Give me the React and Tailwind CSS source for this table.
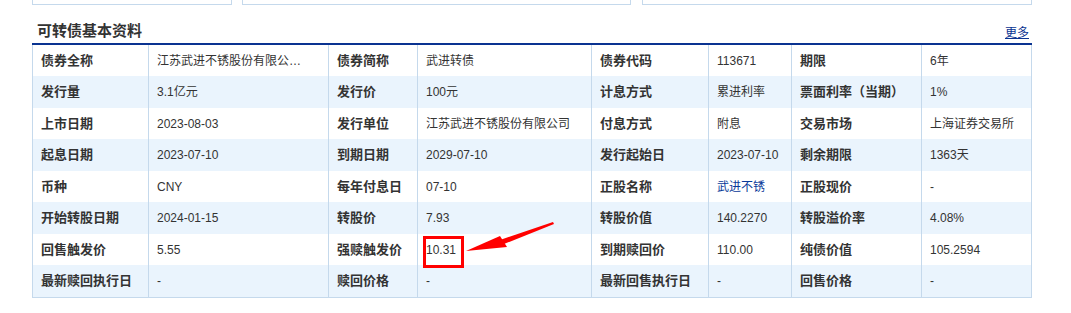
import React from "react";

const rows = [
  [["债券全称", "江苏武进不锈股份有限公…"], ["债券简称", "武进转债"], ["债券代码", "113671"], ["期限", "6年"]],
  [["发行量", "3.1亿元"], ["发行价", "100元"], ["计息方式", "累进利率"], ["票面利率（当期）", "1%"]],
  [["上市日期", "2023-08-03"], ["发行单位", "江苏武进不锈股份有限公司"], ["付息方式", "附息"], ["交易市场", "上海证券交易所"]],
  [["起息日期", "2023-07-10"], ["到期日期", "2029-07-10"], ["发行起始日", "2023-07-10"], ["剩余期限", "1363天"]],
  [["币种", "CNY"], ["每年付息日", "07-10"], ["正股名称", "武进不锈", true], ["正股现价", "-"]],
  [["开始转股日期", "2024-01-15"], ["转股价", "7.93"], ["转股价值", "140.2270"], ["转股溢价率", "4.08%"]],
  [["回售触发价", "5.55"], ["强赎触发价", "10.31"], ["到期赎回价", "110.00"], ["纯债价值", "105.2594"]],
  [["最新赎回执行日", "-"], ["赎回价格", "-"], ["最新回售执行日", "-"], ["回售价格", "-"]],
];

const font = { fontFamily: '"Liberation Sans", "Noto Sans CJK SC", sans-serif' };

export default function App() {
  return (
    <div className="relative w-[1071px] h-[313px] bg-white overflow-hidden" style={font}>
      {/* panels above */}
      <div className="flex ml-[32px]">
        <div className="w-[200px] h-[5px] border-x border-b border-[#c5d9ec]" />
        <div className="w-[389px] h-[5px] border-x border-b border-[#c5d9ec] ml-[10px]" />
        <div className="w-[390px] h-[5px] border-x border-b border-[#c5d9ec] ml-[11px]" />
      </div>

      {/* header */}
      <div className="ml-[32px] w-[1000px] h-[40px] flex justify-between items-end border-b-2 border-[#0a3391]">
        <div className="pl-[5px] pb-[5px] text-[15px] leading-[15px] font-bold text-[#333]">可转债基本资料</div>
        <a className="pr-[3px] pb-[4px] text-[12px] leading-[12px] text-[#0a3391] underline">更多</a>
      </div>

      {/* table */}
      <div className="ml-[32px] w-[1000px] border-x border-b border-[#c5d9ec]">
        {rows.map((row, i) => (
          <div
            key={i}
            className={
              "grid grid-cols-[116px_180px_89px_174px_117px_83px_130px_109px] " +
              (i % 2 === 0 ? "h-[31px] bg-white" : "h-[32px] bg-[#eaf4fd]")
            }
          >
            {row.map(([label, value, link], j) => (
              <React.Fragment key={j}>
                <div className="flex items-center pl-2 border-r border-[#c5d9ec] text-[13px] font-bold text-[#333] whitespace-nowrap">
                  {label}
                </div>
                <div
                  className={
                    "flex items-center pl-2 text-[12px] whitespace-nowrap " +
                    (j < 3 ? "border-r border-[#c5d9ec] " : "") +
                    (link ? "text-[#0a3a99]" : "text-[#333]")
                  }
                >
                  {value}
                </div>
              </React.Fragment>
            ))}
          </div>
        ))}
      </div>

      {/* annotation */}
      <div className="absolute left-[423px] top-[236px] w-[41px] h-[32px] border-[3px] border-[#ff0000]" />
      <svg className="absolute left-[460px] top-[215px]" width="100" height="45" viewBox="0 0 100 45">
        <polygon points="6,36 40,21 47,32" fill="#ff0000" />
        <polygon points="40,25 93,7 94,9 44,29" fill="#ff0000" />
      </svg>
    </div>
  );
}
